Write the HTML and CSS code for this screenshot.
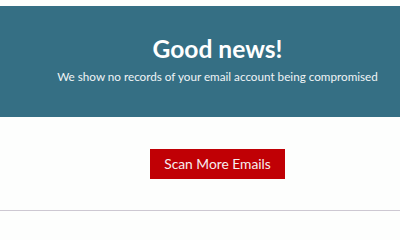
FILE: index.html
```html
<!DOCTYPE html>
<html>
<head>
<meta charset="utf-8">
<link rel="stylesheet" href="styles.css">
</head>
<body>
<section class="banner">
  <h1 class="title">Good news!</h1>
  <p class="subtitle">We show no records of your email account being compromised</p>
</section>
<section class="actions">
  <a class="btn" href="#">Scan More Emails</a>
</section>
<hr class="divider">
</body>
</html>
```
FILE: styles.css
```css
html, body {
  margin: 0;
  padding: 0;
  background: #fdfefd;
  font-family: Lato, "Open Sans", sans-serif;
  overflow: hidden;
}
.banner {
  margin-top: 6px;
  height: 111px;
  box-sizing: border-box;
  background: #356f84;
  color: #fff;
  padding: 26px 0 0 35px;
  display: flex;
  flex-direction: column;
  align-items: center;
}
.title {
  margin: 0;
  font-size: 24.6px;
  font-weight: 700;
  line-height: 34px;
}
.subtitle {
  margin: 2px 0 0;
  font-size: 11.7px;
  line-height: 16px;
  color: #f0f4f6;
}
.actions {
  display: flex;
  justify-content: center;
  padding: 32px 0 0 35px;
  height: 93px;
  box-sizing: border-box;
}
.btn {
  display: block;
  width: 135px;
  height: 30px;
  background: #c00005;
  color: #f6eef0;
  text-decoration: none;
  font-size: 13.8px;
  line-height: 30px;
  text-align: center;
}
.divider {
  margin: 0;
  border: 0;
  height: 1px;
  background: #cdc8d2;
}
```
